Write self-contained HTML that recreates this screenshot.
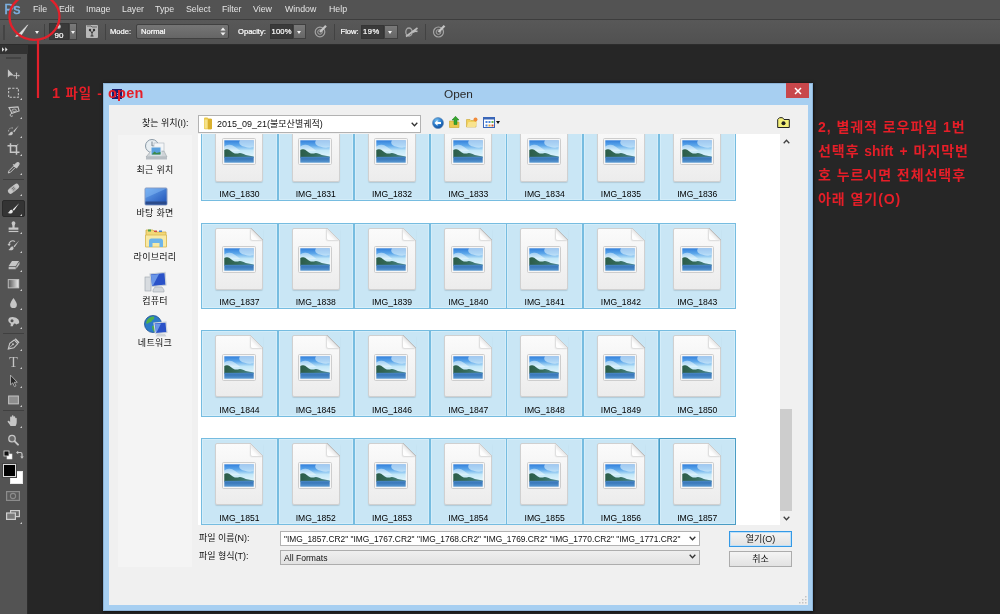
<!DOCTYPE html>
<html lang="ko"><head><meta charset="utf-8"><title>Open</title>
<style>
html,body{margin:0;padding:0}
body{width:1000px;height:614px;overflow:hidden;position:relative;background:#262626;font-family:"Liberation Sans","Noto Sans CJK KR",sans-serif;}
div,span,i,svg{position:absolute;box-sizing:border-box}
.menubar{left:0;top:0;width:1000px;height:19px;background:#535353}
.menubar span{top:3px;font-size:8.8px;line-height:12px;color:#e4e4e4;white-space:nowrap}
.mline{left:0;top:19px;width:1000px;height:1px;background:#3d3d3d}
.optbar{left:0;top:20px;width:1000px;height:24px;background:linear-gradient(#585858,#515151)}
.optbar span{font-size:7.600px;line-height:10px;color:#fff;white-space:nowrap;top:6.700px;-webkit-text-stroke:.2px #fff}
.oline{left:0;top:44px;width:1000px;height:1px;background:#2c2c2c}
.sep{width:1px;top:4px;height:16px;background:#424242;border-right:0}
.dk{background:#3a3a3a;top:3px;height:17px;border:1px solid #353535}
.btn{background:linear-gradient(#7a7a7a,#666);top:3px;height:17px;border:1px solid #404040}
.tri{width:0;height:0;border-left:2.5px solid transparent;border-right:2.5px solid transparent;border-top:3px solid #f2f2f2}
.tools{left:0;top:45px;width:28px;height:569px;background:#535353;border-right:1.400px solid #2c2c2c}
.thead{left:0;top:0;width:28px;height:9px;background:#323232}
.tsep{left:3px;width:21px;height:1px;background:#404040}
.tools svg{left:6px;width:15px;height:13.500px;overflow:visible}
.tools .c{left:20px;width:0;height:0;border-left:2.500px solid transparent;border-bottom:2.500px solid #cfcfcf}
.red{color:#e61e28;font-weight:bold;white-space:nowrap}
.dlg{left:103.400px;top:82.600px;width:710.400px;height:528px;background:#a7cff1;box-shadow:inset 0 0 0 1px #8db4d8,0 0 2.500px 0.500px rgba(0,0,0,.55)}
.dlgin{left:109px;top:105px;width:699px;height:500px;background:#f0f0f0}
.ttl{left:103px;top:87px;width:711px;text-align:center;font-size:11.8px;line-height:14px;color:#2a2a2a}
.close{left:786px;top:83px;width:23px;height:15px;background:#c8474b}
.lbl{font-size:9px;line-height:12px;color:#111;white-space:nowrap}
.combo{background:#fff;border:1px solid #b2b2b2}
.places{left:118px;top:135px;width:74px;height:432px;background:#f4f4f4}
.places span{left:0;width:74px;text-align:center;letter-spacing:.3px;font-size:9px;line-height:12px;color:#111}
.places svg{left:25px;width:26px;height:24px;overflow:visible}
.list{left:198px;top:134px;width:594px;height:390.500px;background:#fff;overflow:hidden}
.it{width:76.500px;height:86.500px;background:#c9e6f5;border:1px solid #76bce0;box-shadow:inset 0 0 0 1px #d4edf9}
.it.foc{border-color:#4a9cc4}
.it span{left:0;width:74.500px;top:72.600px;text-align:center;font-size:8.600px;line-height:12px;color:#000}
.pg{left:13px;top:4px;width:48px;height:62px;background:linear-gradient(#fbfbfb,#ececec);border:1px solid #d0d0d0;border-radius:2px;box-shadow:0 1px 1px rgba(0,0,0,.12)}
.pg .fold{right:-1px;top:-1px;width:12.500px;height:12.500px;background:linear-gradient(225deg,#c9e6f5 0,#c9e6f5 49%,#bdbdbd 50%,#e9e9e9 56%,#fdfdfd 75%,#fff 100%);border-bottom-left-radius:2px;box-shadow:-1px 1px 1.500px rgba(0,0,0,.13)}
.pg svg{left:5.700px;top:17.600px;width:34px;height:27px}
.sb{right:0;top:0;width:12px;height:100%;background:#f0f0f0}
.sbthumb{left:0;top:275px;width:12px;height:102px;background:#cdcdcd}
.arr{left:2.500px}
.pbtn{background:linear-gradient(#f4f4f4,#e2e2e2);border:1px solid #acacac;font-size:9px;line-height:14px;text-align:center;color:#111}
.ticon{left:112px;top:89px;width:10px;height:10px;background:#1c1c6c}
.r2{font-size:14px;line-height:23.900px;z-index:50;white-space:nowrap;letter-spacing:.95px;word-spacing:0px}
.r2 b{font-size:13.800px;letter-spacing:0;word-spacing:2.200px}
.r1{font-size:13.400px;line-height:18px;z-index:50;letter-spacing:1px;word-spacing:.5px}
.r1 b{font-size:14.500px;letter-spacing:.2px}
body>*{will-change:transform}

</style></head><body>
<svg width="0" height="0" style="left:0;top:0"><defs><linearGradient id="sk" x1="0" y1="0" x2="0" y2="1"><stop offset="0" stop-color="#3380dc"/><stop offset=".3" stop-color="#5ba6ea"/><stop offset=".6" stop-color="#c2e7f8"/><stop offset="1" stop-color="#e2f5fc"/></linearGradient><linearGradient id="mt" x1="0" y1="0" x2="1" y2="0"><stop offset="0" stop-color="#2c5c48"/><stop offset=".45" stop-color="#356c5c"/><stop offset="1" stop-color="#4c8894"/></linearGradient><linearGradient id="wt" x1="0" y1="0" x2="0" y2="1"><stop offset="0" stop-color="#4a88c4"/><stop offset=".35" stop-color="#3a78ba"/><stop offset="1" stop-color="#5a9ad2"/></linearGradient><linearGradient id="fd" x1="0" y1="1" x2="1" y2="0"><stop offset="0" stop-color="#ffffff"/><stop offset="1" stop-color="#d4d4d4"/></linearGradient></defs></svg>
<div class="menubar">
<span style="left:4.200px;top:0.500px;font-size:14.400px;line-height:17px;font-weight:normal;color:#7cb0e0;letter-spacing:-.6px;-webkit-text-stroke:.5px #7cb0e0">Ps</span>
<span style="left:33px">File</span>
<span style="left:59px">Edit</span>
<span style="left:86px">Image</span>
<span style="left:122px">Layer</span>
<span style="left:155px">Type</span>
<span style="left:186px">Select</span>
<span style="left:222px">Filter</span>
<span style="left:253px">View</span>
<span style="left:285px">Window</span>
<span style="left:329px">Help</span>
</div>
<div class="mline"></div>
<div class="optbar">
<div style="left:3px;top:5px;width:2px;height:15px;background:#444"></div>
<svg style="left:14px;top:4px" width="16" height="14" viewBox="0 0 16 14"><path d="M13.800 .8 L5.500 9.300 L7.500 10.800 Z" fill="#e0e0e0" stroke="#e0e0e0" stroke-width=".6"/><path d="M1 12.500 q3 .5 5 -1 q1 -1.500 -.5 -2.500 q-1.500 -.5 -2.500 1 q-.5 1.500 -2 2.500 z" fill="#d8d8d8"/></svg>
<div class="tri" style="left:35px;top:11px"></div>
<div class="sep" style="left:44px"></div>
<div class="dk" style="left:49px;width:20px"></div>
<div style="left:56px;top:4px;width:5px;height:5px;border-radius:50%;background:radial-gradient(#fff,#999 60%,#3a3a3a)"></div>
<span style="left:54.500px;top:11px;font-size:8px;line-height:9px">90</span>
<div class="btn" style="left:69px;width:8px"></div>
<div class="tri" style="left:70.500px;top:10.500px"></div>
<div style="left:86px;top:5px;width:12px;height:13px;background:#b8b8b8;border-radius:1px"></div>
<svg style="left:86px;top:5px" width="12" height="13" viewBox="0 0 12 13"><path d="M1 1 h4 l1 1 h5" stroke="#666" fill="none"/><circle cx="4" cy="5" r="1.200" fill="#333"/><circle cx="8" cy="5" r="1.200" fill="#333"/><path d="M4 5 L6 8 L8 5 M6 8 v3 M4.500 11 h3" stroke="#333" fill="none" stroke-width="1"/></svg>
<div class="sep" style="left:105px"></div>
<span style="left:110px">Mode:</span>
<div class="btn" style="left:136px;top:4px;height:15px;width:93px;border-radius:2px;background:linear-gradient(#757575,#656565)"></div>
<span style="left:141px;top:7px">Normal</span>
<svg style="left:220px;top:7px" width="6" height="9" viewBox="0 0 6 9"><path d="M0.500 3.500 L3 0.500 L5.500 3.500 Z M0.500 5.500 L3 8.500 L5.500 5.500 Z" fill="#f0f0f0"/></svg>
<span style="left:238px">Opacity:</span>
<div class="dk" style="left:270px;width:23px;top:4px;height:14.500px"></div>
<span style="left:271.500px;top:6.500px;letter-spacing:.2px">100%</span>
<div class="btn" style="left:293px;width:13px;top:4px;height:14.500px"></div>
<div class="tri" style="left:297px;top:10.500px"></div>
<svg style="left:314px;top:5px" width="13" height="13" viewBox="0 0 13 13"><circle cx="6" cy="7" r="4.800" fill="none" stroke="#a4a4a4" stroke-width="1.200"/><circle cx="6" cy="7" r="2.300" fill="none" stroke="#a4a4a4" stroke-width="1"/><path d="M6 7 L12 0.800" stroke="#c4c4c4" stroke-width="2.200"/></svg>
<div class="sep" style="left:334px"></div>
<span style="left:340.500px">Flow:</span>
<div class="dk" style="left:361px;width:23px;top:5px;height:14px"></div>
<span style="left:363px;top:7.200px;letter-spacing:.5px">19%</span>
<div class="btn" style="left:384px;width:13.500px;top:5px;height:14px"></div>
<div class="tri" style="left:388px;top:10.500px"></div>
<svg style="left:404px;top:5px" width="15" height="13" viewBox="0 0 15 13"><ellipse cx="5" cy="7" rx="3.200" ry="4" fill="none" stroke="#a4a4a4" stroke-width="1.300"/><path d="M2 11.500 L13.500 3 M9 7.500 q2 -2 4.500 -1" stroke="#bcbcbc" stroke-width="1.600" fill="none"/></svg>
<div class="sep" style="left:425px"></div>
<svg style="left:432px;top:5px" width="14" height="13" viewBox="0 0 14 13"><circle cx="6.500" cy="7" r="5" fill="none" stroke="#a4a4a4" stroke-width="1.200"/><circle cx="6.500" cy="7" r="2.400" fill="none" stroke="#a4a4a4" stroke-width="1"/><path d="M6.500 7 L12.500 0.800" stroke="#c4c4c4" stroke-width="2.200"/></svg>
</div>
<div class="oline"></div>

<div class="tools">
<div class="thead"></div>
<svg style="left:2px;top:1.500px;width:6.500px;height:5px" viewBox="0 0 7 5"><path d="M0 0 L2.500 2.500 L0 5 Z M3.500 0 L6 2.500 L3.500 5 Z" fill="#e0e0e0"/></svg>
<div style="left:6px;top:12px;width:15px;height:2px;background:#434343"></div>
<svg style="top:22.2px" viewBox="0 0 20 18"><path d="M2.500 3 L2.500 14 L5.300 11.300 L10.500 11.300 Z" fill="#c6c6c6"/><path d="M14 8 v7 M10.500 11.500 h7" stroke="#c6c6c6" stroke-width="1.200"/><path d="M14 7 l1.500 1.800 h-3z M14 16 l1.500 -1.800 h-3z M9.500 11.500 l1.800 -1.500 v3z M18.500 11.500 l-1.800 -1.500 v3z" fill="#c6c6c6"/></svg>
<svg style="top:41.2px" viewBox="0 0 20 18"><rect x="3.500" y="3" width="13" height="12" fill="none" stroke="#c6c6c6" stroke-width="1.400" stroke-dasharray="3 1.800"/></svg>
<i class="c" style="top:52.5px"></i>
<svg style="top:60.2px" viewBox="0 0 20 18"><path d="M4 3.500 L16 2.500 L17.500 8 L8 11 L4 3.500 Z" fill="none" stroke="#c6c6c6" stroke-width="1.400"/><path d="M8 11 q-3 1 -2.500 3 q1 2 3.500 0.500" fill="none" stroke="#c6c6c6" stroke-width="1.300"/><ellipse cx="11" cy="7" rx="3" ry="1.600" fill="none" stroke="#c6c6c6" stroke-width="1.100"/></svg>
<i class="c" style="top:71.5px"></i>
<svg style="top:79.2px" viewBox="0 0 20 18"><path d="M17 2 L9.500 9.500 L11 11 Z" fill="#c6c6c6"/><path d="M8.500 10 q-2.500 0 -3.500 2 q-1 2 -2.500 2.500 q3.500 1.500 6 -0.500 q1.500 -1.500 0 -4 z" fill="#c6c6c6"/><path d="M3.500 10 a4.500 4 0 0 1 6 -4.500" fill="none" stroke="#c6c6c6" stroke-width="1.100" stroke-dasharray="2 1.200"/></svg>
<i class="c" style="top:90.5px"></i>
<svg style="top:97.2px" viewBox="0 0 20 18"><path d="M6 1.500 V13.500 H18 M2 5 H14 V17" fill="none" stroke="#c6c6c6" stroke-width="2"/><path d="M16.500 2.500 L12 7" stroke="#c6c6c6" stroke-width="1"/></svg>
<i class="c" style="top:108.5px"></i>
<svg style="top:116.2px" viewBox="0 0 20 18"><path d="M3 16 L4 13 L10.500 6.500 L12.500 8.500 L6 15 Z" fill="none" stroke="#c6c6c6" stroke-width="1.300"/><path d="M9.500 4.500 L14.500 9.500 M11 6 L14.500 2.500 q1.500 -1 2.500 0 q1 1 0 2.500 L14.500 8.500 z" fill="#c6c6c6" stroke="#c6c6c6" stroke-width="1.600"/></svg>
<i class="c" style="top:127.5px"></i>
<div class="tsep" style="top:134px"></div>
<svg style="top:137.2px" viewBox="0 0 20 18"><g transform="rotate(-38 10 9)"><rect x="1.500" y="5.500" width="17" height="7" rx="3.300" fill="#c6c6c6"/><rect x="7" y="5.500" width="6" height="7" fill="#b0b0b0"/><circle cx="9" cy="8" r=".6" fill="#555"/><circle cx="11" cy="8" r=".6" fill="#555"/><circle cx="9" cy="10" r=".6" fill="#555"/><circle cx="11" cy="10" r=".6" fill="#555"/></g></svg>
<i class="c" style="top:148.5px"></i>
<div style="left:2px;top:155px;width:23px;height:17px;background:#343434;border-radius:2px;border:1px solid #2a2a2a"></div>
<svg style="top:156.8px" viewBox="0 0 20 18"><path d="M17.500 1.500 L9 10 L10.500 11.500 Z" fill="#f0f0f0"/><path d="M8.300 10.300 q-2.500 -.3 -3.500 1.700 q-.8 2 -2.600 2.800 q3.800 1.400 6.300 -.6 q1.500 -1.500 -.2 -3.900 z" fill="#e8e8e8"/></svg>
<i class="c" style="top:168.5px"></i>
<svg style="top:175.2px" viewBox="0 0 20 18"><path d="M8 2.500 q2 -1.500 4 0 q1.200 1.500 0 3.500 q-.8 1.500 -.5 4 h5 v3 h-13 v-3 h5 q.3 -2.500 -.5 -4 q-1.200 -2 0 -3.500 z" fill="#c6c6c6"/><rect x="3.500" y="14.500" width="13" height="1.600" fill="#c6c6c6"/></svg>
<i class="c" style="top:186.5px"></i>
<svg style="top:194.2px" viewBox="0 0 20 18"><path d="M17.500 2 L10 9.500 L11.500 11 Z" fill="#c6c6c6"/><path d="M9.300 10 q-2.500 -.3 -3.500 1.700 q-.8 2 -2.600 2.800 q3.800 1.400 6.300 -.6 q1.500 -1.500 -.2 -3.900 z" fill="#c6c6c6"/><path d="M4 8 a5 5 0 0 1 8 -4.500" fill="none" stroke="#c6c6c6" stroke-width="1.500"/><path d="M2 6.500 l2.200 3 l2.200 -3.200 z" fill="#c6c6c6"/></svg>
<i class="c" style="top:205.5px"></i>
<svg style="top:213.2px" viewBox="0 0 20 18"><path d="M8 4 h9.500 l-4.500 6.500 h-9.500 z" fill="#c6c6c6"/><path d="M3.500 11.500 h9.500 v3.500 h-9.500 z M13.800 11 l4.200 -6 v3.200 l-4.200 6 z" fill="#bdbdbd"/></svg>
<i class="c" style="top:224.5px"></i>
<svg style="top:232.2px" viewBox="0 0 20 18"><defs><linearGradient id="gr" x1="0" x2="1"><stop offset="0" stop-color="#555"/><stop offset="1" stop-color="#eee"/></linearGradient></defs><rect x="3" y="3.500" width="14" height="11" fill="url(#gr)" stroke="#c6c6c6" stroke-width="1.200"/></svg>
<i class="c" style="top:243.5px"></i>
<svg style="top:251.2px" viewBox="0 0 20 18"><path d="M10 2.500 q4.500 6 4.500 9 a4.500 4.500 0 0 1 -9 0 q0 -3 4.500 -9 z" fill="#c6c6c6"/></svg>
<i class="c" style="top:262.5px"></i>
<svg style="top:270.2px" viewBox="0 0 20 18"><path d="M3 7 q0 -4.500 6 -4.500 q5 0 7.500 3.500 q1.500 2.500 1 5 l-4 1.500 q-1 -2 -3 -1 l-1.500 3.500 h-3 l.5 -3.500 q-3.500 -1 -3.500 -4.500 z" fill="#c6c6c6"/><circle cx="8" cy="7.500" r="2" fill="#535353"/></svg>
<i class="c" style="top:281.5px"></i>
<div class="tsep" style="top:288px"></div>
<svg style="top:292.2px" viewBox="0 0 20 18"><path d="M3 16 L5 8.500 L11 4 L15.500 9 L10.500 14.500 Z" fill="none" stroke="#c6c6c6" stroke-width="1.400"/><path d="M3 16 L9 10" stroke="#c6c6c6" stroke-width="1.100"/><circle cx="9.300" cy="9.700" r="1.300" fill="#c6c6c6"/><path d="M11.500 3 L16.500 8.500 L18 7 L13 1.500 Z" fill="#c6c6c6"/></svg>
<i class="c" style="top:303.5px"></i>
<svg style="top:310.2px" viewBox="0 0 20 18"><text x="10" y="15.500" text-anchor="middle" font-family="Liberation Serif,serif" font-size="18.500" fill="#c6c6c6">T</text></svg>
<i class="c" style="top:321.5px"></i>
<svg style="top:329.2px" viewBox="0 0 20 18"><path d="M6 1.500 L6 14.500 L9 11.800 L11.300 16.800 L13.300 15.800 L11 11 L15 11 Z" fill="#2a2a2a" stroke="#c6c6c6" stroke-width="1"/></svg>
<i class="c" style="top:340.5px"></i>
<svg style="top:348.2px" viewBox="0 0 20 18"><rect x="3.500" y="4" width="13" height="10.500" fill="#8e8e8e" stroke="#c6c6c6" stroke-width="1.300"/></svg>
<i class="c" style="top:359.5px"></i>
<div class="tsep" style="top:365px"></div>
<svg style="top:369.2px" viewBox="0 0 20 18"><path d="M6 16 q-1 -2.500 -3.500 -5 q-1 -1.500 .3 -2 q1.200 -.3 2.700 1.500 V4.500 q.1 -1.200 1.100 -1.200 q1 0 1.100 1.200 V3 q.1 -1.200 1.200 -1.200 q1.100 0 1.200 1.200 V4 q.1 -1.100 1.100 -1.100 q1 0 1.100 1.100 V6 q.1 -1 1 -1 q.9 0 1 1 V11 q0 3 -1.500 5 Z" fill="#c6c6c6"/></svg>
<i class="c" style="top:380.5px"></i>
<svg style="top:388.2px" viewBox="0 0 20 18"><circle cx="8" cy="7.500" r="4.300" fill="#6a6a6a" stroke="#c6c6c6" stroke-width="1.700"/><path d="M11.300 10.800 L16 15.500" stroke="#c6c6c6" stroke-width="2.600" stroke-linecap="round"/></svg>
<svg style="left:3px;top:405px;width:22px;height:10px" viewBox="0 0 22 10"><rect x="4" y="4" width="5" height="5" fill="#fff" stroke="#ddd" stroke-width=".6"/><rect x="1" y="1" width="5" height="5" fill="#111" stroke="#ddd" stroke-width=".8"/><path d="M14.500 2.500 h3 q1.500 0 1.500 1.500 v3" fill="none" stroke="#c6c6c6" stroke-width="1.200"/><path d="M13 2.500 l2.200 -1.800 v3.600 z M19 8.800 l-1.800 -2.200 h3.600 z" fill="#c6c6c6"/></svg>
<div style="left:10px;top:426px;width:13px;height:13px;background:#fff;border:1px solid #e8e8e8"></div>
<div style="left:3px;top:419px;width:13px;height:13px;background:#000;border:1px solid #dcdcdc;box-shadow:0 0 0 1px #444"></div>
<svg style="left:6px;top:446px;width:14px;height:10px" viewBox="0 0 14 10"><rect x=".6" y=".6" width="12.800" height="8.800" fill="#5a5a5a" stroke="#8c8c8c" stroke-width="1.200"/><circle cx="7" cy="5" r="2.600" fill="none" stroke="#8c8c8c" stroke-width="1.100"/></svg>
<svg style="left:6px;top:465px;width:14px;height:10px" viewBox="0 0 14 10"><rect x="4.600" y=".6" width="8.800" height="6" fill="#6a6a6a" stroke="#cfcfcf" stroke-width="1.200"/><rect x=".6" y="3" width="8.800" height="6.400" fill="#7a7a7a" stroke="#cfcfcf" stroke-width="1.200"/></svg>
<i class="c" style="top:476.5px"></i>
</div>
<div class="dlg"></div>
<div class="dlgin"></div>
<div class="ticon"><i style="left:2px;top:3px;width:2px;height:5px;background:#9aa0e0"></i><i style="left:5px;top:4px;width:3px;height:1px;background:#9aa0e0"></i><i style="left:5px;top:6px;width:3px;height:1px;background:#9aa0e0"></i></div>
<div class="ttl">Open</div>
<div class="close"><svg style="left:8px;top:4px" width="8" height="8" viewBox="0 0 8 8"><path d="M1 1 L7 7 M7 1 L1 7" stroke="#fff" stroke-width="1.500"/></svg></div>
<span class="lbl" style="left:142px;top:117px">찾는 위치(I):</span>
<div class="combo" style="left:198px;top:115px;width:223px;height:18px"></div>
<svg style="left:203px;top:117px" width="10" height="13" viewBox="0 0 10 13"><path d="M1 1.500 q0 -1 1 -1 h2.500 l1 1.200 h2.500 q1 0 1 1 v8.500 q0 1 -1 1 h-6 q-1 0 -1 -1 z" fill="#e9c84a"/><path d="M5 1.700 h3 q1 0 1 1 v8.500 q0 1 -1 1 h-3 z" fill="#d9b02e"/><path d="M1.500 2.500 h3 v9 h-3 z" fill="#f6e28a"/></svg>
<span class="lbl" style="left:217px;top:118px">2015_09_21(불모산별궤적)</span>
<svg style="left:411px;top:122px" width="7" height="5" viewBox="0 0 7 5"><path d="M.7 .7 L3.500 3.700 L6.300 .7" fill="none" stroke="#333" stroke-width="1.300"/></svg>
<svg style="left:432px;top:117px" width="12" height="12" viewBox="0 0 12 12"><defs><radialGradient id="bk" cx=".4" cy=".3" r=".8"><stop offset="0" stop-color="#7cc4f2"/><stop offset=".55" stop-color="#2474c6"/><stop offset="1" stop-color="#0e3f86"/></radialGradient></defs><circle cx="6" cy="6" r="5.500" fill="url(#bk)" stroke="#5c86b4" stroke-width=".6"/><path d="M2.500 6 L5.500 3.300 V5.100 H9 V6.900 H5.500 V8.700 Z" fill="#fff"/></svg>
<svg style="left:449px;top:116px" width="11" height="12" viewBox="0 0 11 12"><path d="M.5 5 h3.500 l1 1 h5 v5.500 h-9.500 z" fill="#ecc94f" stroke="#c9a32c" stroke-width=".6"/><path d="M6.500 .3 L10 4 H8 V8.500 H5 V4 H3 Z" fill="#35a52e" stroke="#1d7a1c" stroke-width=".5"/></svg>
<svg style="left:466px;top:117px" width="12" height="11" viewBox="0 0 12 11"><path d="M.5 2.500 h3.500 l1 1 h5 v6.500 h-9.500 z" fill="#f2d15a" stroke="#caa431" stroke-width=".6"/><path d="M.8 10 L2.500 5 h8.500 l-1.500 5 z" fill="#f8e38f"/><circle cx="9.500" cy="2.500" r="2" fill="#f08a3a"/></svg>
<svg style="left:483px;top:117px" width="12" height="11" viewBox="0 0 12 11"><rect x=".5" y=".5" width="11" height="10" fill="#fff" stroke="#3a66b8" stroke-width="1"/><rect x=".5" y=".5" width="11" height="2" fill="#3a66b8"/><rect x="2.500" y="4" width="2" height="2" fill="#4c86d8"/><rect x="5.500" y="4" width="2" height="2" fill="#4c86d8"/><rect x="8.500" y="4" width="2" height="2" fill="#6ab04c"/><rect x="2.500" y="7.500" width="2" height="2" fill="#4c86d8"/><rect x="5.500" y="7.500" width="2" height="2" fill="#e0a030"/><rect x="8.500" y="7.500" width="2" height="2" fill="#d05030"/></svg>
<div style="left:496px;top:121px;width:0;height:0;border-left:2.500px solid transparent;border-right:2.500px solid transparent;border-top:3px solid #111"></div>
<svg style="left:777px;top:117px" width="13" height="11" viewBox="0 0 13 11"><path d="M.7 2.500 L2.500 .7 h3 l1.500 1.800 h5.300 v8 h-11.600 z" fill="#f4f07a" stroke="#222" stroke-width="1"/><circle cx="6.500" cy="6.300" r="2" fill="#222"/></svg>
<div class="places">
<svg style="top:3px" viewBox="0 0 26 24"><circle cx="9" cy="8" r="6.500" fill="#e8eef2" stroke="#8a99a6" stroke-width="1"/><path d="M9 3.500 V8 H12" stroke="#7a8894" fill="none" stroke-width="1"/><path d="M3 19 L8 13 H21 L24 19 Z" fill="#cfd4d8" stroke="#9aa2a8" stroke-width=".6"/><path d="M3 19 H24 V21.500 H3 Z" fill="#b8bec4"/><rect x="11" y="5" width="10" height="8" fill="#f4f6f8" stroke="#aab4bc" stroke-width=".6"/><rect x="8" y="9" width="10" height="8" fill="#5aa0dc" stroke="#e8eef2" stroke-width="1"/><path d="M8.500 16.500 l3 -3 l2 1.500 l4 -1 v2.500 z" fill="#3d8a4a"/></svg>
<span style="top:28.500px">최근 위치</span>
<svg style="top:50px" viewBox="0 0 26 24"><defs><linearGradient id="dsk" x1="0" y1="0" x2="1" y2="1"><stop offset="0" stop-color="#6aa8f0"/><stop offset="1" stop-color="#1d4fb4"/></linearGradient></defs><rect x="2" y="3" width="22" height="17" rx="1" fill="url(#dsk)" stroke="#8a9cc0" stroke-width="1"/><path d="M2.500 3.500 h21 L2.500 13 Z" fill="#8cc0f8" opacity=".45"/><rect x="2.500" y="16.500" width="21" height="3" fill="#2a4a8a"/></svg>
<span style="top:71.500px">바탕 화면</span>
<svg style="top:91px" viewBox="0 0 26 24"><path d="M3 4 h7 l2 2 h11 v14 h-20 z" fill="#f3d878" stroke="#d2ae44" stroke-width=".8"/><rect x="5" y="3.500" width="3" height="2" fill="#4aa04a"/><rect x="11" y="4.500" width="3" height="1.500" fill="#d05040"/><rect x="16" y="4.500" width="3" height="1.500" fill="#4a80d0"/><path d="M2.500 9 h21 v12 h-21 z" fill="#f8e9a4" stroke="#d8b850" stroke-width=".8"/><path d="M6 21 v-6 q0 -2.500 2.500 -2.500 h9 q2.500 0 2.500 2.500 v6 h-3.500 v-4 h-7 v4 z" fill="#6db4ea"/></svg>
<span style="top:115.500px">라이브러리</span>
<svg style="top:136px" viewBox="0 0 26 24"><rect x="2" y="6" width="6" height="14" fill="#d8dce0" stroke="#9aa2aa" stroke-width=".6"/><path d="M7 3 L22 1.500 L23 14 L8.500 15.500 Z" fill="#2a52c8" stroke="#c8d0d8" stroke-width="1.200"/><path d="M8 4 L16 3 L10 14.500 L8.800 14.600 Z" fill="#86b4f4" opacity=".7"/><path d="M12 16 h7 l2 3 v2 h-11 v-2 z" fill="#d4d8dc" stroke="#a0a8b0" stroke-width=".6"/></svg>
<span style="top:159.500px">컴퓨터</span>
<svg style="top:179px" viewBox="0 0 26 24"><circle cx="10" cy="10" r="8.500" fill="#2c7ac8" stroke="#1a4f92" stroke-width=".8"/><path d="M4 6 q3 -4 7 -3.500 q1 2.500 -1.500 3.500 q-1 2.500 -3.500 2.500 q-1.500 2 -3 .5 z M9 12 q3 -1 4.500 1.500 q0 3 -2.500 4.500 q-2 -2.500 -2 -6 z" fill="#4eb04a"/><path d="M11 9 L23 8 L24 18.500 L12.500 19.500 Z" fill="#2a52c8" stroke="#d0d6dc" stroke-width="1.200"/><path d="M12 10 L18 9.500 L13.500 18.500 L13 18.500 Z" fill="#86b4f4" opacity=".7"/><path d="M14 20 h8 l1.500 2.500 h-11 z" fill="#cfd4d8"/></svg>
<span style="top:202px">네트워크</span>
</div>

<div class="list">
<div class="it" style="left:3.2px;top:-19.4px"><div class="pg"><i class="fold"></i><svg viewBox="0 0 34 27"><rect x=".5" y=".5" width="33" height="26" rx="1" fill="#f6f6f6" stroke="#cdcdcd" stroke-width="1"/><rect x="2.300" y="2.300" width="29.400" height="17" fill="url(#sk)"/><path d="M18 2.300 h13.700 v7 q-5 1 -9 -.5 q-5 -1 -5.500 -4 q0 -1.500 .8 -2.500 z" fill="#e8f7fd" opacity=".6"/><path d="M2.300 8.500 q2 -2 5 -1.800 q3 -.2 5 1.800 q3 1.500 6 4.500 l-16 1 z" fill="#f2fbfe" opacity=".5"/><path d="M2.300 12 q1.200 -1 3 -.8 q2 .2 3.500 1.800 q2 1.600 4 2.600 q1.500 -.4 3 0 q1.500 -1 3.500 -.4 q2.500 .4 4.500 1.800 q4 .8 7.900 1.600 v1.200 h-29.400 z" fill="url(#mt)"/><rect x="2.300" y="18.800" width="29.400" height="5.900" fill="url(#wt)"/></svg></div><span>IMG_1830</span></div>
<div class="it" style="left:79.5px;top:-19.4px"><div class="pg"><i class="fold"></i><svg viewBox="0 0 34 27"><rect x=".5" y=".5" width="33" height="26" rx="1" fill="#f6f6f6" stroke="#cdcdcd" stroke-width="1"/><rect x="2.300" y="2.300" width="29.400" height="17" fill="url(#sk)"/><path d="M18 2.300 h13.700 v7 q-5 1 -9 -.5 q-5 -1 -5.500 -4 q0 -1.500 .8 -2.500 z" fill="#e8f7fd" opacity=".6"/><path d="M2.300 8.500 q2 -2 5 -1.800 q3 -.2 5 1.800 q3 1.500 6 4.500 l-16 1 z" fill="#f2fbfe" opacity=".5"/><path d="M2.300 12 q1.200 -1 3 -.8 q2 .2 3.500 1.800 q2 1.600 4 2.600 q1.500 -.4 3 0 q1.500 -1 3.500 -.4 q2.500 .4 4.500 1.800 q4 .8 7.900 1.600 v1.200 h-29.400 z" fill="url(#mt)"/><rect x="2.300" y="18.800" width="29.400" height="5.900" fill="url(#wt)"/></svg></div><span>IMG_1831</span></div>
<div class="it" style="left:155.8px;top:-19.4px"><div class="pg"><i class="fold"></i><svg viewBox="0 0 34 27"><rect x=".5" y=".5" width="33" height="26" rx="1" fill="#f6f6f6" stroke="#cdcdcd" stroke-width="1"/><rect x="2.300" y="2.300" width="29.400" height="17" fill="url(#sk)"/><path d="M18 2.300 h13.700 v7 q-5 1 -9 -.5 q-5 -1 -5.500 -4 q0 -1.500 .8 -2.500 z" fill="#e8f7fd" opacity=".6"/><path d="M2.300 8.500 q2 -2 5 -1.800 q3 -.2 5 1.800 q3 1.500 6 4.500 l-16 1 z" fill="#f2fbfe" opacity=".5"/><path d="M2.300 12 q1.200 -1 3 -.8 q2 .2 3.500 1.800 q2 1.600 4 2.600 q1.500 -.4 3 0 q1.500 -1 3.500 -.4 q2.500 .4 4.500 1.800 q4 .8 7.900 1.600 v1.200 h-29.400 z" fill="url(#mt)"/><rect x="2.300" y="18.800" width="29.400" height="5.900" fill="url(#wt)"/></svg></div><span>IMG_1832</span></div>
<div class="it" style="left:232.1px;top:-19.4px"><div class="pg"><i class="fold"></i><svg viewBox="0 0 34 27"><rect x=".5" y=".5" width="33" height="26" rx="1" fill="#f6f6f6" stroke="#cdcdcd" stroke-width="1"/><rect x="2.300" y="2.300" width="29.400" height="17" fill="url(#sk)"/><path d="M18 2.300 h13.700 v7 q-5 1 -9 -.5 q-5 -1 -5.500 -4 q0 -1.500 .8 -2.500 z" fill="#e8f7fd" opacity=".6"/><path d="M2.300 8.500 q2 -2 5 -1.800 q3 -.2 5 1.800 q3 1.500 6 4.500 l-16 1 z" fill="#f2fbfe" opacity=".5"/><path d="M2.300 12 q1.200 -1 3 -.8 q2 .2 3.500 1.800 q2 1.600 4 2.600 q1.500 -.4 3 0 q1.500 -1 3.500 -.4 q2.500 .4 4.500 1.800 q4 .8 7.900 1.600 v1.200 h-29.400 z" fill="url(#mt)"/><rect x="2.300" y="18.800" width="29.400" height="5.900" fill="url(#wt)"/></svg></div><span>IMG_1833</span></div>
<div class="it" style="left:308.4px;top:-19.4px"><div class="pg"><i class="fold"></i><svg viewBox="0 0 34 27"><rect x=".5" y=".5" width="33" height="26" rx="1" fill="#f6f6f6" stroke="#cdcdcd" stroke-width="1"/><rect x="2.300" y="2.300" width="29.400" height="17" fill="url(#sk)"/><path d="M18 2.300 h13.700 v7 q-5 1 -9 -.5 q-5 -1 -5.500 -4 q0 -1.500 .8 -2.500 z" fill="#e8f7fd" opacity=".6"/><path d="M2.300 8.500 q2 -2 5 -1.800 q3 -.2 5 1.800 q3 1.500 6 4.500 l-16 1 z" fill="#f2fbfe" opacity=".5"/><path d="M2.300 12 q1.200 -1 3 -.8 q2 .2 3.500 1.800 q2 1.600 4 2.600 q1.500 -.4 3 0 q1.500 -1 3.500 -.4 q2.500 .4 4.500 1.800 q4 .8 7.900 1.600 v1.200 h-29.400 z" fill="url(#mt)"/><rect x="2.300" y="18.800" width="29.400" height="5.900" fill="url(#wt)"/></svg></div><span>IMG_1834</span></div>
<div class="it" style="left:384.7px;top:-19.4px"><div class="pg"><i class="fold"></i><svg viewBox="0 0 34 27"><rect x=".5" y=".5" width="33" height="26" rx="1" fill="#f6f6f6" stroke="#cdcdcd" stroke-width="1"/><rect x="2.300" y="2.300" width="29.400" height="17" fill="url(#sk)"/><path d="M18 2.300 h13.700 v7 q-5 1 -9 -.5 q-5 -1 -5.500 -4 q0 -1.500 .8 -2.500 z" fill="#e8f7fd" opacity=".6"/><path d="M2.300 8.500 q2 -2 5 -1.800 q3 -.2 5 1.800 q3 1.500 6 4.500 l-16 1 z" fill="#f2fbfe" opacity=".5"/><path d="M2.300 12 q1.200 -1 3 -.8 q2 .2 3.500 1.800 q2 1.600 4 2.600 q1.500 -.4 3 0 q1.500 -1 3.500 -.4 q2.500 .4 4.500 1.800 q4 .8 7.900 1.600 v1.200 h-29.400 z" fill="url(#mt)"/><rect x="2.300" y="18.800" width="29.400" height="5.900" fill="url(#wt)"/></svg></div><span>IMG_1835</span></div>
<div class="it" style="left:461.0px;top:-19.4px"><div class="pg"><i class="fold"></i><svg viewBox="0 0 34 27"><rect x=".5" y=".5" width="33" height="26" rx="1" fill="#f6f6f6" stroke="#cdcdcd" stroke-width="1"/><rect x="2.300" y="2.300" width="29.400" height="17" fill="url(#sk)"/><path d="M18 2.300 h13.700 v7 q-5 1 -9 -.5 q-5 -1 -5.500 -4 q0 -1.500 .8 -2.500 z" fill="#e8f7fd" opacity=".6"/><path d="M2.300 8.500 q2 -2 5 -1.800 q3 -.2 5 1.800 q3 1.500 6 4.500 l-16 1 z" fill="#f2fbfe" opacity=".5"/><path d="M2.300 12 q1.200 -1 3 -.8 q2 .2 3.500 1.800 q2 1.600 4 2.600 q1.500 -.4 3 0 q1.500 -1 3.500 -.4 q2.500 .4 4.500 1.800 q4 .8 7.900 1.600 v1.200 h-29.400 z" fill="url(#mt)"/><rect x="2.300" y="18.800" width="29.400" height="5.900" fill="url(#wt)"/></svg></div><span>IMG_1836</span></div>
<div class="it" style="left:3.2px;top:88.5px"><div class="pg"><i class="fold"></i><svg viewBox="0 0 34 27"><rect x=".5" y=".5" width="33" height="26" rx="1" fill="#f6f6f6" stroke="#cdcdcd" stroke-width="1"/><rect x="2.300" y="2.300" width="29.400" height="17" fill="url(#sk)"/><path d="M18 2.300 h13.700 v7 q-5 1 -9 -.5 q-5 -1 -5.500 -4 q0 -1.500 .8 -2.500 z" fill="#e8f7fd" opacity=".6"/><path d="M2.300 8.500 q2 -2 5 -1.800 q3 -.2 5 1.800 q3 1.500 6 4.500 l-16 1 z" fill="#f2fbfe" opacity=".5"/><path d="M2.300 12 q1.200 -1 3 -.8 q2 .2 3.500 1.800 q2 1.600 4 2.600 q1.500 -.4 3 0 q1.500 -1 3.500 -.4 q2.500 .4 4.500 1.800 q4 .8 7.900 1.600 v1.200 h-29.400 z" fill="url(#mt)"/><rect x="2.300" y="18.800" width="29.400" height="5.900" fill="url(#wt)"/></svg></div><span>IMG_1837</span></div>
<div class="it" style="left:79.5px;top:88.5px"><div class="pg"><i class="fold"></i><svg viewBox="0 0 34 27"><rect x=".5" y=".5" width="33" height="26" rx="1" fill="#f6f6f6" stroke="#cdcdcd" stroke-width="1"/><rect x="2.300" y="2.300" width="29.400" height="17" fill="url(#sk)"/><path d="M18 2.300 h13.700 v7 q-5 1 -9 -.5 q-5 -1 -5.500 -4 q0 -1.500 .8 -2.500 z" fill="#e8f7fd" opacity=".6"/><path d="M2.300 8.500 q2 -2 5 -1.800 q3 -.2 5 1.800 q3 1.500 6 4.500 l-16 1 z" fill="#f2fbfe" opacity=".5"/><path d="M2.300 12 q1.200 -1 3 -.8 q2 .2 3.500 1.800 q2 1.600 4 2.600 q1.500 -.4 3 0 q1.500 -1 3.500 -.4 q2.500 .4 4.500 1.800 q4 .8 7.900 1.600 v1.200 h-29.400 z" fill="url(#mt)"/><rect x="2.300" y="18.800" width="29.400" height="5.900" fill="url(#wt)"/></svg></div><span>IMG_1838</span></div>
<div class="it" style="left:155.8px;top:88.5px"><div class="pg"><i class="fold"></i><svg viewBox="0 0 34 27"><rect x=".5" y=".5" width="33" height="26" rx="1" fill="#f6f6f6" stroke="#cdcdcd" stroke-width="1"/><rect x="2.300" y="2.300" width="29.400" height="17" fill="url(#sk)"/><path d="M18 2.300 h13.700 v7 q-5 1 -9 -.5 q-5 -1 -5.500 -4 q0 -1.500 .8 -2.500 z" fill="#e8f7fd" opacity=".6"/><path d="M2.300 8.500 q2 -2 5 -1.800 q3 -.2 5 1.800 q3 1.500 6 4.500 l-16 1 z" fill="#f2fbfe" opacity=".5"/><path d="M2.300 12 q1.200 -1 3 -.8 q2 .2 3.500 1.800 q2 1.600 4 2.600 q1.500 -.4 3 0 q1.500 -1 3.500 -.4 q2.500 .4 4.500 1.800 q4 .8 7.900 1.600 v1.200 h-29.400 z" fill="url(#mt)"/><rect x="2.300" y="18.800" width="29.400" height="5.900" fill="url(#wt)"/></svg></div><span>IMG_1839</span></div>
<div class="it" style="left:232.1px;top:88.5px"><div class="pg"><i class="fold"></i><svg viewBox="0 0 34 27"><rect x=".5" y=".5" width="33" height="26" rx="1" fill="#f6f6f6" stroke="#cdcdcd" stroke-width="1"/><rect x="2.300" y="2.300" width="29.400" height="17" fill="url(#sk)"/><path d="M18 2.300 h13.700 v7 q-5 1 -9 -.5 q-5 -1 -5.500 -4 q0 -1.500 .8 -2.500 z" fill="#e8f7fd" opacity=".6"/><path d="M2.300 8.500 q2 -2 5 -1.800 q3 -.2 5 1.800 q3 1.500 6 4.500 l-16 1 z" fill="#f2fbfe" opacity=".5"/><path d="M2.300 12 q1.200 -1 3 -.8 q2 .2 3.500 1.800 q2 1.600 4 2.600 q1.500 -.4 3 0 q1.500 -1 3.500 -.4 q2.500 .4 4.500 1.800 q4 .8 7.900 1.600 v1.200 h-29.400 z" fill="url(#mt)"/><rect x="2.300" y="18.800" width="29.400" height="5.900" fill="url(#wt)"/></svg></div><span>IMG_1840</span></div>
<div class="it" style="left:308.4px;top:88.5px"><div class="pg"><i class="fold"></i><svg viewBox="0 0 34 27"><rect x=".5" y=".5" width="33" height="26" rx="1" fill="#f6f6f6" stroke="#cdcdcd" stroke-width="1"/><rect x="2.300" y="2.300" width="29.400" height="17" fill="url(#sk)"/><path d="M18 2.300 h13.700 v7 q-5 1 -9 -.5 q-5 -1 -5.500 -4 q0 -1.500 .8 -2.500 z" fill="#e8f7fd" opacity=".6"/><path d="M2.300 8.500 q2 -2 5 -1.800 q3 -.2 5 1.800 q3 1.500 6 4.500 l-16 1 z" fill="#f2fbfe" opacity=".5"/><path d="M2.300 12 q1.200 -1 3 -.8 q2 .2 3.500 1.800 q2 1.600 4 2.600 q1.500 -.4 3 0 q1.500 -1 3.500 -.4 q2.500 .4 4.500 1.800 q4 .8 7.900 1.600 v1.200 h-29.400 z" fill="url(#mt)"/><rect x="2.300" y="18.800" width="29.400" height="5.900" fill="url(#wt)"/></svg></div><span>IMG_1841</span></div>
<div class="it" style="left:384.7px;top:88.5px"><div class="pg"><i class="fold"></i><svg viewBox="0 0 34 27"><rect x=".5" y=".5" width="33" height="26" rx="1" fill="#f6f6f6" stroke="#cdcdcd" stroke-width="1"/><rect x="2.300" y="2.300" width="29.400" height="17" fill="url(#sk)"/><path d="M18 2.300 h13.700 v7 q-5 1 -9 -.5 q-5 -1 -5.500 -4 q0 -1.500 .8 -2.500 z" fill="#e8f7fd" opacity=".6"/><path d="M2.300 8.500 q2 -2 5 -1.800 q3 -.2 5 1.800 q3 1.500 6 4.500 l-16 1 z" fill="#f2fbfe" opacity=".5"/><path d="M2.300 12 q1.200 -1 3 -.8 q2 .2 3.500 1.800 q2 1.600 4 2.600 q1.500 -.4 3 0 q1.500 -1 3.500 -.4 q2.500 .4 4.500 1.800 q4 .8 7.900 1.600 v1.200 h-29.400 z" fill="url(#mt)"/><rect x="2.300" y="18.800" width="29.400" height="5.900" fill="url(#wt)"/></svg></div><span>IMG_1842</span></div>
<div class="it" style="left:461.0px;top:88.5px"><div class="pg"><i class="fold"></i><svg viewBox="0 0 34 27"><rect x=".5" y=".5" width="33" height="26" rx="1" fill="#f6f6f6" stroke="#cdcdcd" stroke-width="1"/><rect x="2.300" y="2.300" width="29.400" height="17" fill="url(#sk)"/><path d="M18 2.300 h13.700 v7 q-5 1 -9 -.5 q-5 -1 -5.500 -4 q0 -1.500 .8 -2.500 z" fill="#e8f7fd" opacity=".6"/><path d="M2.300 8.500 q2 -2 5 -1.800 q3 -.2 5 1.800 q3 1.500 6 4.500 l-16 1 z" fill="#f2fbfe" opacity=".5"/><path d="M2.300 12 q1.200 -1 3 -.8 q2 .2 3.500 1.800 q2 1.600 4 2.600 q1.500 -.4 3 0 q1.500 -1 3.500 -.4 q2.500 .4 4.500 1.800 q4 .8 7.900 1.600 v1.200 h-29.400 z" fill="url(#mt)"/><rect x="2.300" y="18.800" width="29.400" height="5.900" fill="url(#wt)"/></svg></div><span>IMG_1843</span></div>
<div class="it" style="left:3.2px;top:196.4px"><div class="pg"><i class="fold"></i><svg viewBox="0 0 34 27"><rect x=".5" y=".5" width="33" height="26" rx="1" fill="#f6f6f6" stroke="#cdcdcd" stroke-width="1"/><rect x="2.300" y="2.300" width="29.400" height="17" fill="url(#sk)"/><path d="M18 2.300 h13.700 v7 q-5 1 -9 -.5 q-5 -1 -5.500 -4 q0 -1.500 .8 -2.500 z" fill="#e8f7fd" opacity=".6"/><path d="M2.300 8.500 q2 -2 5 -1.800 q3 -.2 5 1.800 q3 1.500 6 4.500 l-16 1 z" fill="#f2fbfe" opacity=".5"/><path d="M2.300 12 q1.200 -1 3 -.8 q2 .2 3.500 1.800 q2 1.600 4 2.600 q1.500 -.4 3 0 q1.500 -1 3.500 -.4 q2.500 .4 4.500 1.800 q4 .8 7.900 1.600 v1.200 h-29.400 z" fill="url(#mt)"/><rect x="2.300" y="18.800" width="29.400" height="5.900" fill="url(#wt)"/></svg></div><span>IMG_1844</span></div>
<div class="it" style="left:79.5px;top:196.4px"><div class="pg"><i class="fold"></i><svg viewBox="0 0 34 27"><rect x=".5" y=".5" width="33" height="26" rx="1" fill="#f6f6f6" stroke="#cdcdcd" stroke-width="1"/><rect x="2.300" y="2.300" width="29.400" height="17" fill="url(#sk)"/><path d="M18 2.300 h13.700 v7 q-5 1 -9 -.5 q-5 -1 -5.500 -4 q0 -1.500 .8 -2.500 z" fill="#e8f7fd" opacity=".6"/><path d="M2.300 8.500 q2 -2 5 -1.800 q3 -.2 5 1.800 q3 1.500 6 4.500 l-16 1 z" fill="#f2fbfe" opacity=".5"/><path d="M2.300 12 q1.200 -1 3 -.8 q2 .2 3.500 1.800 q2 1.600 4 2.600 q1.500 -.4 3 0 q1.500 -1 3.500 -.4 q2.500 .4 4.500 1.800 q4 .8 7.900 1.600 v1.200 h-29.400 z" fill="url(#mt)"/><rect x="2.300" y="18.800" width="29.400" height="5.900" fill="url(#wt)"/></svg></div><span>IMG_1845</span></div>
<div class="it" style="left:155.8px;top:196.4px"><div class="pg"><i class="fold"></i><svg viewBox="0 0 34 27"><rect x=".5" y=".5" width="33" height="26" rx="1" fill="#f6f6f6" stroke="#cdcdcd" stroke-width="1"/><rect x="2.300" y="2.300" width="29.400" height="17" fill="url(#sk)"/><path d="M18 2.300 h13.700 v7 q-5 1 -9 -.5 q-5 -1 -5.500 -4 q0 -1.500 .8 -2.500 z" fill="#e8f7fd" opacity=".6"/><path d="M2.300 8.500 q2 -2 5 -1.800 q3 -.2 5 1.800 q3 1.500 6 4.500 l-16 1 z" fill="#f2fbfe" opacity=".5"/><path d="M2.300 12 q1.200 -1 3 -.8 q2 .2 3.500 1.800 q2 1.600 4 2.600 q1.500 -.4 3 0 q1.500 -1 3.500 -.4 q2.500 .4 4.500 1.800 q4 .8 7.900 1.600 v1.200 h-29.400 z" fill="url(#mt)"/><rect x="2.300" y="18.800" width="29.400" height="5.900" fill="url(#wt)"/></svg></div><span>IMG_1846</span></div>
<div class="it" style="left:232.1px;top:196.4px"><div class="pg"><i class="fold"></i><svg viewBox="0 0 34 27"><rect x=".5" y=".5" width="33" height="26" rx="1" fill="#f6f6f6" stroke="#cdcdcd" stroke-width="1"/><rect x="2.300" y="2.300" width="29.400" height="17" fill="url(#sk)"/><path d="M18 2.300 h13.700 v7 q-5 1 -9 -.5 q-5 -1 -5.500 -4 q0 -1.500 .8 -2.500 z" fill="#e8f7fd" opacity=".6"/><path d="M2.300 8.500 q2 -2 5 -1.800 q3 -.2 5 1.800 q3 1.500 6 4.500 l-16 1 z" fill="#f2fbfe" opacity=".5"/><path d="M2.300 12 q1.200 -1 3 -.8 q2 .2 3.500 1.800 q2 1.600 4 2.600 q1.500 -.4 3 0 q1.500 -1 3.500 -.4 q2.500 .4 4.500 1.800 q4 .8 7.900 1.600 v1.200 h-29.400 z" fill="url(#mt)"/><rect x="2.300" y="18.800" width="29.400" height="5.900" fill="url(#wt)"/></svg></div><span>IMG_1847</span></div>
<div class="it" style="left:308.4px;top:196.4px"><div class="pg"><i class="fold"></i><svg viewBox="0 0 34 27"><rect x=".5" y=".5" width="33" height="26" rx="1" fill="#f6f6f6" stroke="#cdcdcd" stroke-width="1"/><rect x="2.300" y="2.300" width="29.400" height="17" fill="url(#sk)"/><path d="M18 2.300 h13.700 v7 q-5 1 -9 -.5 q-5 -1 -5.500 -4 q0 -1.500 .8 -2.500 z" fill="#e8f7fd" opacity=".6"/><path d="M2.300 8.500 q2 -2 5 -1.800 q3 -.2 5 1.800 q3 1.500 6 4.500 l-16 1 z" fill="#f2fbfe" opacity=".5"/><path d="M2.300 12 q1.200 -1 3 -.8 q2 .2 3.500 1.800 q2 1.600 4 2.600 q1.500 -.4 3 0 q1.500 -1 3.500 -.4 q2.500 .4 4.500 1.800 q4 .8 7.900 1.600 v1.200 h-29.400 z" fill="url(#mt)"/><rect x="2.300" y="18.800" width="29.400" height="5.900" fill="url(#wt)"/></svg></div><span>IMG_1848</span></div>
<div class="it" style="left:384.7px;top:196.4px"><div class="pg"><i class="fold"></i><svg viewBox="0 0 34 27"><rect x=".5" y=".5" width="33" height="26" rx="1" fill="#f6f6f6" stroke="#cdcdcd" stroke-width="1"/><rect x="2.300" y="2.300" width="29.400" height="17" fill="url(#sk)"/><path d="M18 2.300 h13.700 v7 q-5 1 -9 -.5 q-5 -1 -5.500 -4 q0 -1.500 .8 -2.500 z" fill="#e8f7fd" opacity=".6"/><path d="M2.300 8.500 q2 -2 5 -1.800 q3 -.2 5 1.800 q3 1.500 6 4.500 l-16 1 z" fill="#f2fbfe" opacity=".5"/><path d="M2.300 12 q1.200 -1 3 -.8 q2 .2 3.500 1.800 q2 1.600 4 2.600 q1.500 -.4 3 0 q1.500 -1 3.500 -.4 q2.500 .4 4.500 1.800 q4 .8 7.900 1.600 v1.200 h-29.400 z" fill="url(#mt)"/><rect x="2.300" y="18.800" width="29.400" height="5.900" fill="url(#wt)"/></svg></div><span>IMG_1849</span></div>
<div class="it" style="left:461.0px;top:196.4px"><div class="pg"><i class="fold"></i><svg viewBox="0 0 34 27"><rect x=".5" y=".5" width="33" height="26" rx="1" fill="#f6f6f6" stroke="#cdcdcd" stroke-width="1"/><rect x="2.300" y="2.300" width="29.400" height="17" fill="url(#sk)"/><path d="M18 2.300 h13.700 v7 q-5 1 -9 -.5 q-5 -1 -5.500 -4 q0 -1.500 .8 -2.500 z" fill="#e8f7fd" opacity=".6"/><path d="M2.300 8.500 q2 -2 5 -1.800 q3 -.2 5 1.800 q3 1.500 6 4.500 l-16 1 z" fill="#f2fbfe" opacity=".5"/><path d="M2.300 12 q1.200 -1 3 -.8 q2 .2 3.500 1.800 q2 1.600 4 2.600 q1.500 -.4 3 0 q1.500 -1 3.500 -.4 q2.500 .4 4.500 1.800 q4 .8 7.900 1.600 v1.200 h-29.400 z" fill="url(#mt)"/><rect x="2.300" y="18.800" width="29.400" height="5.900" fill="url(#wt)"/></svg></div><span>IMG_1850</span></div>
<div class="it" style="left:3.2px;top:304.0px"><div class="pg"><i class="fold"></i><svg viewBox="0 0 34 27"><rect x=".5" y=".5" width="33" height="26" rx="1" fill="#f6f6f6" stroke="#cdcdcd" stroke-width="1"/><rect x="2.300" y="2.300" width="29.400" height="17" fill="url(#sk)"/><path d="M18 2.300 h13.700 v7 q-5 1 -9 -.5 q-5 -1 -5.500 -4 q0 -1.500 .8 -2.500 z" fill="#e8f7fd" opacity=".6"/><path d="M2.300 8.500 q2 -2 5 -1.800 q3 -.2 5 1.800 q3 1.500 6 4.500 l-16 1 z" fill="#f2fbfe" opacity=".5"/><path d="M2.300 12 q1.200 -1 3 -.8 q2 .2 3.500 1.800 q2 1.600 4 2.600 q1.500 -.4 3 0 q1.500 -1 3.500 -.4 q2.500 .4 4.500 1.800 q4 .8 7.900 1.600 v1.200 h-29.400 z" fill="url(#mt)"/><rect x="2.300" y="18.800" width="29.400" height="5.900" fill="url(#wt)"/></svg></div><span>IMG_1851</span></div>
<div class="it" style="left:79.5px;top:304.0px"><div class="pg"><i class="fold"></i><svg viewBox="0 0 34 27"><rect x=".5" y=".5" width="33" height="26" rx="1" fill="#f6f6f6" stroke="#cdcdcd" stroke-width="1"/><rect x="2.300" y="2.300" width="29.400" height="17" fill="url(#sk)"/><path d="M18 2.300 h13.700 v7 q-5 1 -9 -.5 q-5 -1 -5.500 -4 q0 -1.500 .8 -2.500 z" fill="#e8f7fd" opacity=".6"/><path d="M2.300 8.500 q2 -2 5 -1.800 q3 -.2 5 1.800 q3 1.500 6 4.500 l-16 1 z" fill="#f2fbfe" opacity=".5"/><path d="M2.300 12 q1.200 -1 3 -.8 q2 .2 3.500 1.800 q2 1.600 4 2.600 q1.500 -.4 3 0 q1.500 -1 3.500 -.4 q2.500 .4 4.500 1.800 q4 .8 7.900 1.600 v1.200 h-29.400 z" fill="url(#mt)"/><rect x="2.300" y="18.800" width="29.400" height="5.900" fill="url(#wt)"/></svg></div><span>IMG_1852</span></div>
<div class="it" style="left:155.8px;top:304.0px"><div class="pg"><i class="fold"></i><svg viewBox="0 0 34 27"><rect x=".5" y=".5" width="33" height="26" rx="1" fill="#f6f6f6" stroke="#cdcdcd" stroke-width="1"/><rect x="2.300" y="2.300" width="29.400" height="17" fill="url(#sk)"/><path d="M18 2.300 h13.700 v7 q-5 1 -9 -.5 q-5 -1 -5.500 -4 q0 -1.500 .8 -2.500 z" fill="#e8f7fd" opacity=".6"/><path d="M2.300 8.500 q2 -2 5 -1.800 q3 -.2 5 1.800 q3 1.500 6 4.500 l-16 1 z" fill="#f2fbfe" opacity=".5"/><path d="M2.300 12 q1.200 -1 3 -.8 q2 .2 3.500 1.800 q2 1.600 4 2.600 q1.500 -.4 3 0 q1.500 -1 3.500 -.4 q2.500 .4 4.500 1.800 q4 .8 7.900 1.600 v1.200 h-29.400 z" fill="url(#mt)"/><rect x="2.300" y="18.800" width="29.400" height="5.900" fill="url(#wt)"/></svg></div><span>IMG_1853</span></div>
<div class="it" style="left:232.1px;top:304.0px"><div class="pg"><i class="fold"></i><svg viewBox="0 0 34 27"><rect x=".5" y=".5" width="33" height="26" rx="1" fill="#f6f6f6" stroke="#cdcdcd" stroke-width="1"/><rect x="2.300" y="2.300" width="29.400" height="17" fill="url(#sk)"/><path d="M18 2.300 h13.700 v7 q-5 1 -9 -.5 q-5 -1 -5.500 -4 q0 -1.500 .8 -2.500 z" fill="#e8f7fd" opacity=".6"/><path d="M2.300 8.500 q2 -2 5 -1.800 q3 -.2 5 1.800 q3 1.500 6 4.500 l-16 1 z" fill="#f2fbfe" opacity=".5"/><path d="M2.300 12 q1.200 -1 3 -.8 q2 .2 3.500 1.800 q2 1.600 4 2.600 q1.500 -.4 3 0 q1.500 -1 3.500 -.4 q2.500 .4 4.500 1.800 q4 .8 7.900 1.600 v1.200 h-29.400 z" fill="url(#mt)"/><rect x="2.300" y="18.800" width="29.400" height="5.900" fill="url(#wt)"/></svg></div><span>IMG_1854</span></div>
<div class="it" style="left:308.4px;top:304.0px"><div class="pg"><i class="fold"></i><svg viewBox="0 0 34 27"><rect x=".5" y=".5" width="33" height="26" rx="1" fill="#f6f6f6" stroke="#cdcdcd" stroke-width="1"/><rect x="2.300" y="2.300" width="29.400" height="17" fill="url(#sk)"/><path d="M18 2.300 h13.700 v7 q-5 1 -9 -.5 q-5 -1 -5.500 -4 q0 -1.500 .8 -2.500 z" fill="#e8f7fd" opacity=".6"/><path d="M2.300 8.500 q2 -2 5 -1.800 q3 -.2 5 1.800 q3 1.500 6 4.500 l-16 1 z" fill="#f2fbfe" opacity=".5"/><path d="M2.300 12 q1.200 -1 3 -.8 q2 .2 3.500 1.800 q2 1.600 4 2.600 q1.500 -.4 3 0 q1.500 -1 3.500 -.4 q2.500 .4 4.500 1.800 q4 .8 7.900 1.600 v1.200 h-29.400 z" fill="url(#mt)"/><rect x="2.300" y="18.800" width="29.400" height="5.900" fill="url(#wt)"/></svg></div><span>IMG_1855</span></div>
<div class="it" style="left:384.7px;top:304.0px"><div class="pg"><i class="fold"></i><svg viewBox="0 0 34 27"><rect x=".5" y=".5" width="33" height="26" rx="1" fill="#f6f6f6" stroke="#cdcdcd" stroke-width="1"/><rect x="2.300" y="2.300" width="29.400" height="17" fill="url(#sk)"/><path d="M18 2.300 h13.700 v7 q-5 1 -9 -.5 q-5 -1 -5.500 -4 q0 -1.500 .8 -2.500 z" fill="#e8f7fd" opacity=".6"/><path d="M2.300 8.500 q2 -2 5 -1.800 q3 -.2 5 1.800 q3 1.500 6 4.500 l-16 1 z" fill="#f2fbfe" opacity=".5"/><path d="M2.300 12 q1.200 -1 3 -.8 q2 .2 3.500 1.800 q2 1.600 4 2.600 q1.500 -.4 3 0 q1.500 -1 3.500 -.4 q2.500 .4 4.500 1.800 q4 .8 7.900 1.600 v1.200 h-29.400 z" fill="url(#mt)"/><rect x="2.300" y="18.800" width="29.400" height="5.900" fill="url(#wt)"/></svg></div><span>IMG_1856</span></div>
<div class="it foc" style="left:461.0px;top:304.0px"><div class="pg"><i class="fold"></i><svg viewBox="0 0 34 27"><rect x=".5" y=".5" width="33" height="26" rx="1" fill="#f6f6f6" stroke="#cdcdcd" stroke-width="1"/><rect x="2.300" y="2.300" width="29.400" height="17" fill="url(#sk)"/><path d="M18 2.300 h13.700 v7 q-5 1 -9 -.5 q-5 -1 -5.500 -4 q0 -1.500 .8 -2.500 z" fill="#e8f7fd" opacity=".6"/><path d="M2.300 8.500 q2 -2 5 -1.800 q3 -.2 5 1.800 q3 1.500 6 4.500 l-16 1 z" fill="#f2fbfe" opacity=".5"/><path d="M2.300 12 q1.200 -1 3 -.8 q2 .2 3.500 1.800 q2 1.600 4 2.600 q1.500 -.4 3 0 q1.500 -1 3.500 -.4 q2.500 .4 4.500 1.800 q4 .8 7.900 1.600 v1.200 h-29.400 z" fill="url(#mt)"/><rect x="2.300" y="18.800" width="29.400" height="5.900" fill="url(#wt)"/></svg></div><span>IMG_1857</span></div>
<div class="sb"><div class="sbthumb"></div>
<svg class="arr" style="top:4.500px" width="7" height="5" viewBox="0 0 7 5"><path d="M.7 4.300 L3.500 1.300 L6.300 4.300" fill="none" stroke="#404040" stroke-width="1.300"/></svg>
<svg class="arr" style="bottom:4px" width="7" height="5" viewBox="0 0 7 5"><path d="M.7 .7 L3.500 3.700 L6.300 .7" fill="none" stroke="#404040" stroke-width="1.300"/></svg>
</div>
</div>
<span class="lbl" style="left:199px;top:532px">파일 이름(N):</span>
<div class="combo" style="left:280px;top:531px;width:420px;height:15px;overflow:hidden"><span class="lbl" style="left:3px;top:0.500px;font-size:8.400px">"IMG_1857.CR2" "IMG_1767.CR2" "IMG_1768.CR2" "IMG_1769.CR2" "IMG_1770.CR2" "IMG_1771.CR2"</span></div>
<svg style="left:689px;top:536px" width="7" height="5" viewBox="0 0 7 5"><path d="M.7 .7 L3.500 3.700 L6.300 .7" fill="none" stroke="#333" stroke-width="1.300"/></svg>
<span class="lbl" style="left:199px;top:550px">파일 형식(T):</span>
<div class="combo" style="left:280px;top:549.500px;width:420px;height:14.500px;background:linear-gradient(#efefef,#e2e2e2);border-color:#adadad"><span class="lbl" style="left:3px;top:0.500px;font-size:8.600px">All Formats</span></div>
<svg style="left:689px;top:554px" width="7" height="5" viewBox="0 0 7 5"><path d="M.7 .7 L3.500 3.700 L6.300 .7" fill="none" stroke="#333" stroke-width="1.300"/></svg>
<div class="pbtn" style="left:729px;top:531px;width:63px;height:16px;border-color:#3399e6;box-shadow:inset 0 0 0 1px #bfe0f8">열기(O)</div>
<div class="pbtn" style="left:729px;top:550.500px;width:63px;height:16px">취소</div>
<svg style="left:799px;top:596px" width="8" height="8" viewBox="0 0 8 8"><g fill="#c4c4c4"><rect x="6" y="0" width="1.500" height="1.500"/><rect x="3" y="3" width="1.500" height="1.500"/><rect x="6" y="3" width="1.500" height="1.500"/><rect x="0" y="6" width="1.500" height="1.500"/><rect x="3" y="6" width="1.500" height="1.500"/><rect x="6" y="6" width="1.500" height="1.500"/></g></svg>
<svg style="left:0;top:0;z-index:50" width="120" height="110" viewBox="0 0 120 110"><ellipse cx="34.500" cy="16.800" rx="25" ry="23" fill="none" stroke="#e3202b" stroke-width="2.300"/><path d="M38 40 V98" stroke="#e3202b" stroke-width="2.200" fill="none"/></svg>
<span id="r1" class="red r1" style="left:52px;top:84px"><b>1</b> 파일 - <b>open</b></span>
<div id="r2" class="red r2" style="left:818px;top:116px;">2, 별궤적 로우파일 1번<br>선택후 <b>shift + </b>마지막번<br>호 누르시면 전체선택후<br>아래 열기(O)</div>

</body></html>
